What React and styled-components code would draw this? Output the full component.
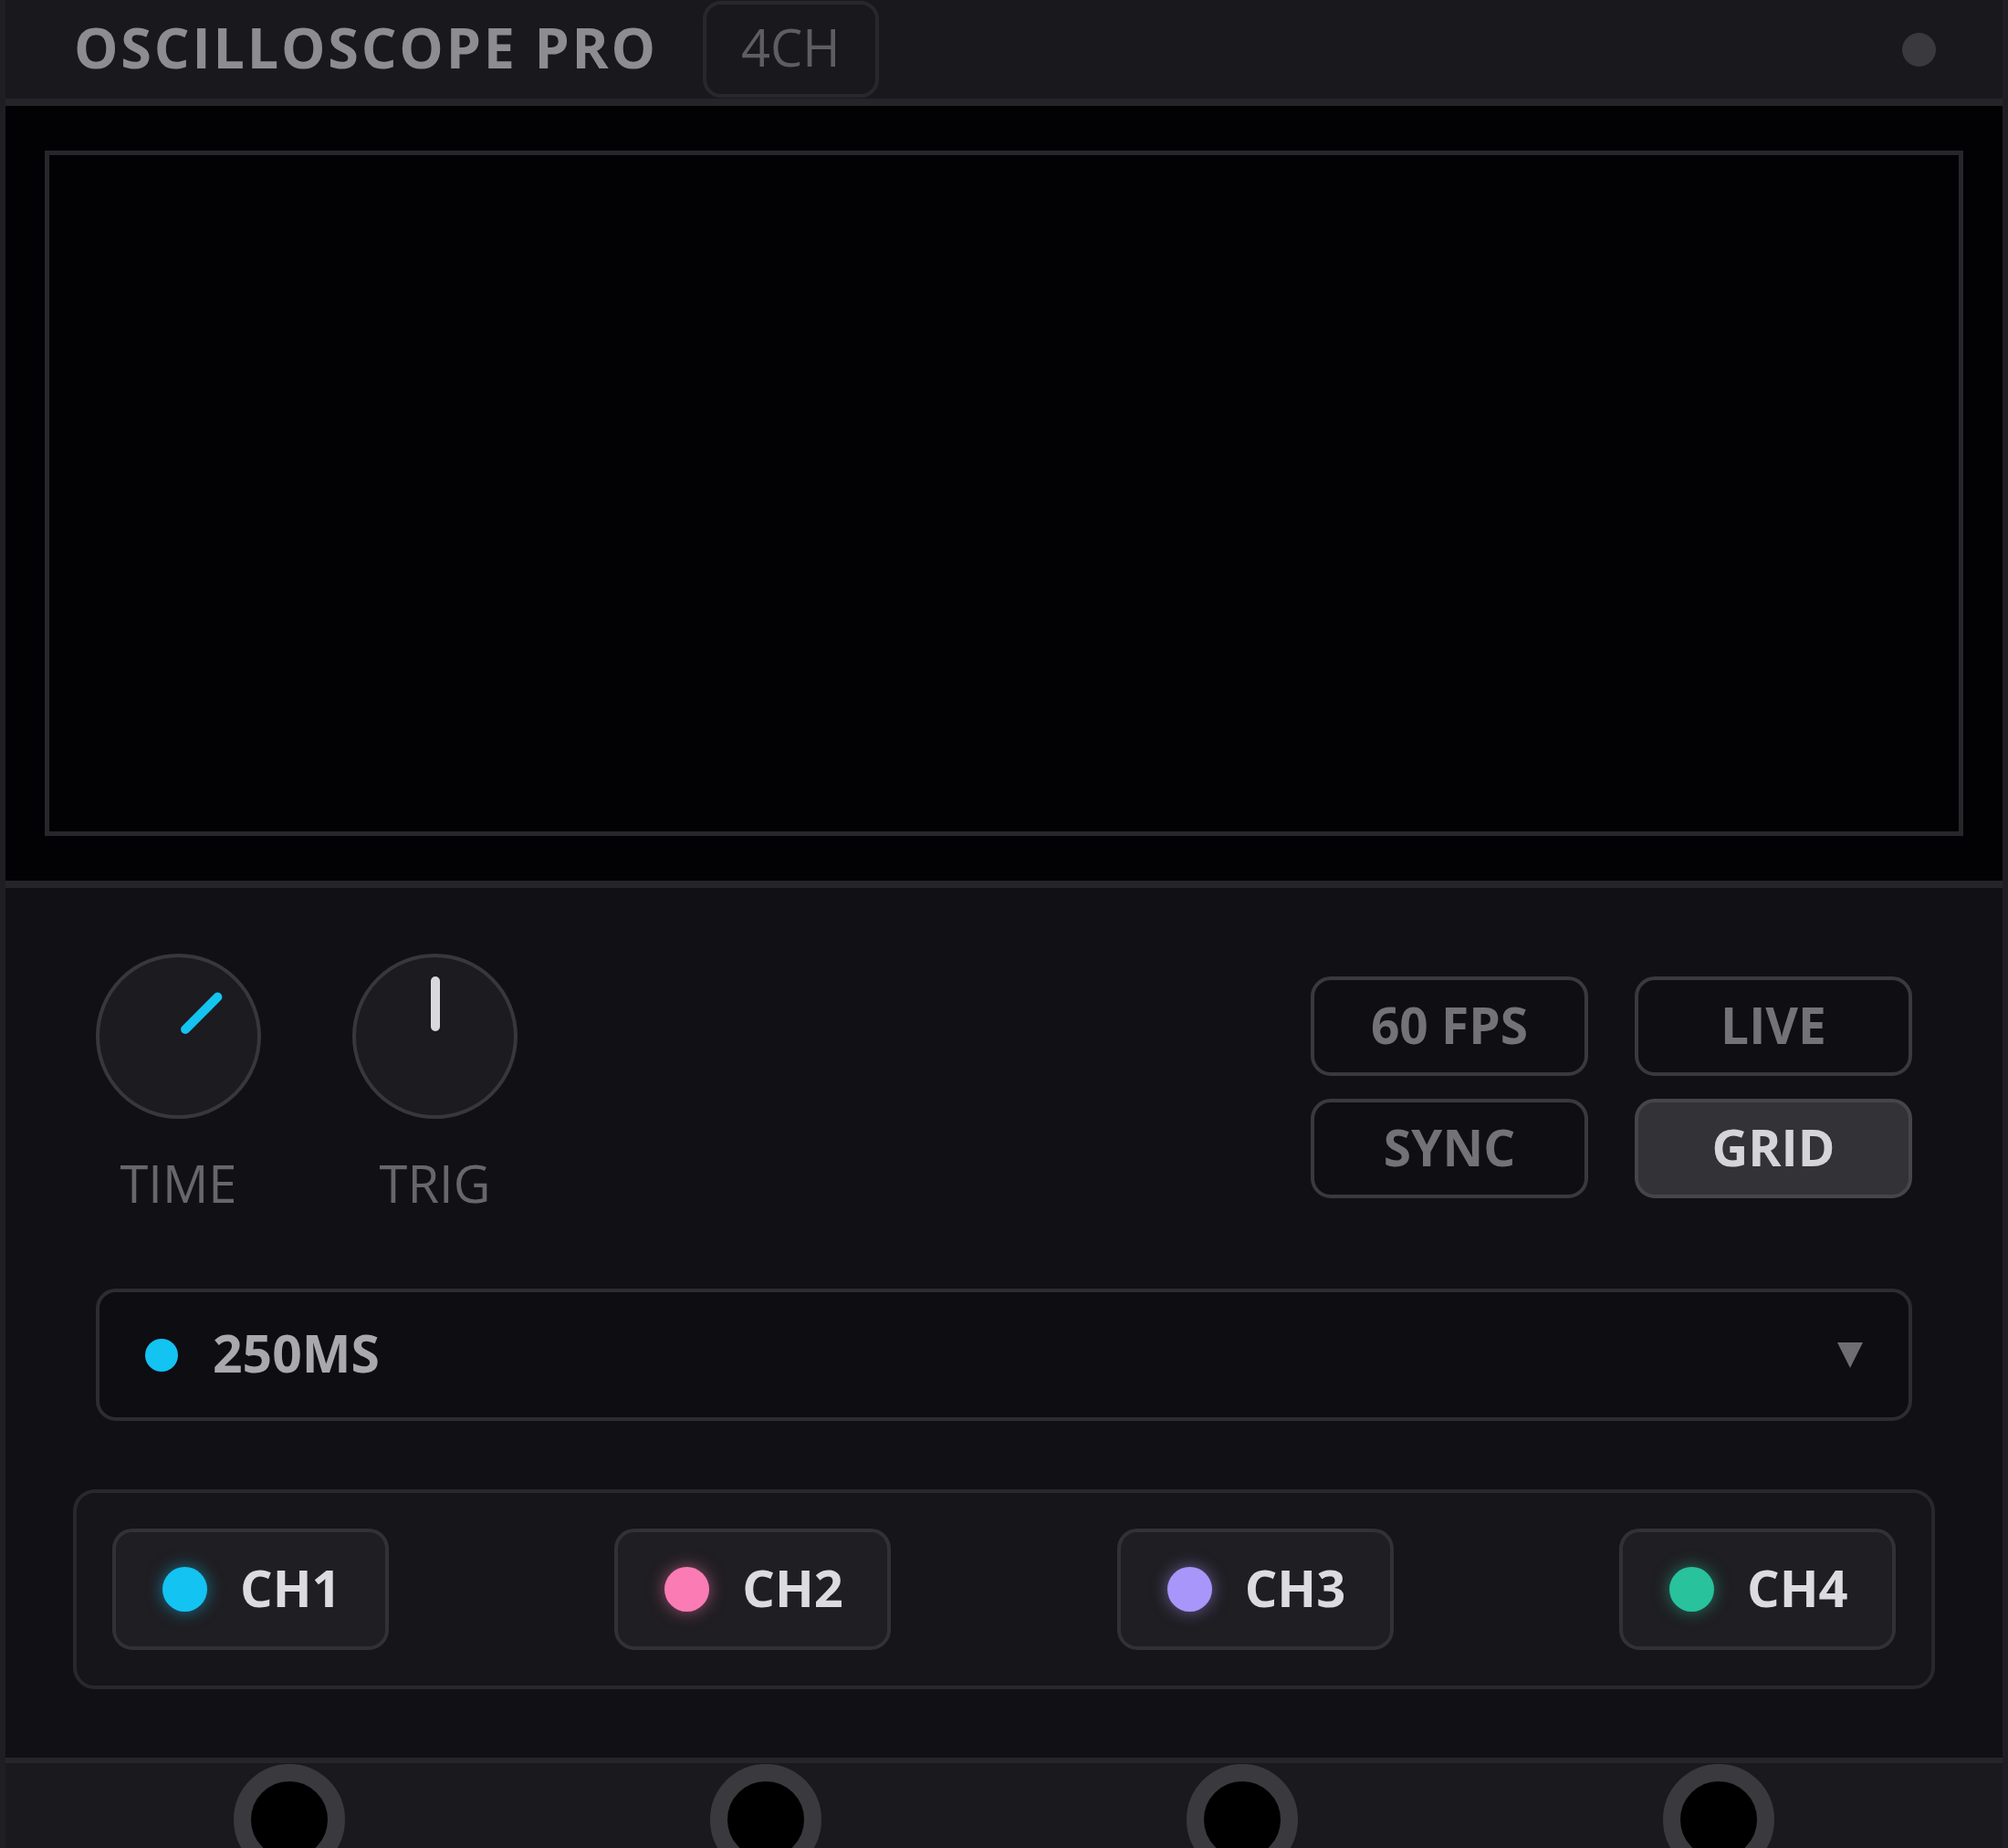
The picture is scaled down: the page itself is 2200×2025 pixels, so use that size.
import styled, { createGlobalStyle } from 'styled-components';

const GlobalStyle = createGlobalStyle`
  html, body {
    margin: 0;
    padding: 0;
    background: #1c1b1f;
  }
  * {
    box-sizing: border-box;
  }
`;

const channels = [
  { name: 'CH1', color: '#13c3f2' },
  { name: 'CH2', color: '#fb7bb5' },
  { name: 'CH3', color: '#a996fa' },
  { name: 'CH4', color: '#28c29d' },
];

const toggles = [
  { label: '60 FPS', active: false },
  { label: 'LIVE', active: false },
  { label: 'SYNC', active: false },
  { label: 'GRID', active: true },
];

function App() {
  return (
    <>
      <GlobalStyle />
      <Panel>
        <Header>
          <Title>OSCILLOSCOPE PRO</Title>
          <Badge>4CH</Badge>
          <StatusDot />
        </Header>

        <Screen>
          <Frame />
        </Screen>

        <Controls>
          <TopRow>
            <Knobs>
              <KnobColumn>
                <Knob>
                  <Pointer angle={45} color="#14c3f0" />
                </Knob>
                <KnobLabel>TIME</KnobLabel>
              </KnobColumn>
              <KnobColumn>
                <Knob>
                  <Pointer angle={0} color="#d9d8dd" />
                </Knob>
                <KnobLabel>TRIG</KnobLabel>
              </KnobColumn>
            </Knobs>
            <ToggleGrid>
              {toggles.map((t) => (
                <Toggle key={t.label} active={t.active}>
                  {t.label}
                </Toggle>
              ))}
            </ToggleGrid>
          </TopRow>

          <Select>
            <Dot size={36} color="#13c3f2" />
            <SelectValue>250MS</SelectValue>
            <Caret viewBox="0 0 28 28">
              <polygon points="0,0 28,0 14,28" fill="currentColor" />
            </Caret>
          </Select>

          <ChannelStrip>
            {channels.map((ch) => (
              <ChannelButton key={ch.name}>
                <Dot size={49} color={ch.color} glow />
                <ChannelName>{ch.name}</ChannelName>
              </ChannelButton>
            ))}
          </ChannelStrip>
        </Controls>

        <Jacks>
          {channels.map((ch) => (
            <Jack key={ch.name} />
          ))}
        </Jacks>
      </Panel>
    </>
  );
}

export default App;

const Panel = styled.div`
  width: 2200px;
  border-left: 6px solid #1f1e22;
  border-right: 6px solid #1f1e22;
  font-family: 'Open Sans', 'Noto Sans', sans-serif;
`;

const Header = styled.div`
  height: 116px;
  display: flex;
  align-items: center;
  padding: 0 73px 0 75px;
  background: #19181c;
  border-bottom: 8px solid #252428;
`;

const Title = styled.h1`
  margin: 0 0 6px;
  font-size: 61px;
  font-weight: 700;
  letter-spacing: 2.8px;
  color: #8d8c91;
  line-height: 1;
`;

const Badge = styled.div`
  margin-left: 49px;
  height: 106px;
  display: flex;
  align-items: center;
  padding: 0 38px 6px;
  border: 4px solid #28272b;
  border-radius: 20px;
  font-size: 56px;
  font-weight: 400;
  color: #5e5d62;
`;

const StatusDot = styled.div`
  margin-left: auto;
  width: 37px;
  height: 37px;
  border-radius: 50%;
  background: #3a393e;
`;

const Screen = styled.div`
  background: #020103;
  padding: 49px 43px;
  border-bottom: 8px solid #252428;
`;

const Frame = styled.div`
  height: 751px;
  border: 5px solid #27262a;
`;

const Controls = styled.div`
  background: #111014;
  padding: 72px 99px 75px;
`;

const TopRow = styled.div`
  display: flex;
  justify-content: space-between;
  align-items: flex-start;
`;

const Knobs = styled.div`
  display: flex;
  gap: 100px;
`;

const KnobColumn = styled.div`
  display: flex;
  flex-direction: column;
  align-items: center;
`;

const Knob = styled.div`
  position: relative;
  width: 181px;
  height: 181px;
  border-radius: 50%;
  border: 4px solid #38373c;
  background: #1c1b20;
`;

const Pointer = styled.span`
  position: absolute;
  left: 50%;
  top: 21px;
  width: 10px;
  height: 60px;
  margin-left: -5px;
  border-radius: 5px;
  background: ${(p) => p.color};
  transform-origin: 50% 65px;
  transform: rotate(${(p) => p.angle}deg);
`;

const KnobLabel = styled.div`
  margin-top: 37px;
  font-size: 56px;
  line-height: 67px;
  color: #67666b;
`;

const ToggleGrid = styled.div`
  margin-top: 25px;
  display: grid;
  grid-template-columns: repeat(2, 304px);
  grid-auto-rows: 109px;
  column-gap: 51px;
  row-gap: 25px;
`;

const Toggle = styled.div`
  display: flex;
  align-items: center;
  justify-content: center;
  padding-bottom: 5px;
  border: 4px solid ${(p) => (p.active ? '#46454a' : '#3a393e')};
  border-radius: 22px;
  background: ${(p) => (p.active ? '#333237' : '#0f0e12')};
  color: ${(p) => (p.active ? '#d5d4d9' : '#737277')};
  font-size: 55px;
  font-weight: 700;
`;

const Select = styled.div`
  margin-top: 82px;
  height: 145px;
  display: flex;
  align-items: center;
  padding: 0 50px;
  border: 4px solid #2d2c31;
  border-radius: 22px;
  background: #0e0d11;
`;

const Dot = styled.span`
  flex: none;
  width: ${(p) => p.size}px;
  height: ${(p) => p.size}px;
  border-radius: 50%;
  background: ${(p) => p.color};
  box-shadow: ${(p) => (p.glow ? `0 0 18px ${p.color}88` : 'none')};
`;

const SelectValue = styled.span`
  margin: 0 0 5px 38px;
  font-size: 57px;
  font-weight: 700;
  color: #a9a8ad;
`;

const Caret = styled.svg`
  margin-left: auto;
  width: 28px;
  height: 28px;
  color: #6e6d72;
`;

const ChannelStrip = styled.div`
  margin: 75px -25px 0;
  display: flex;
  justify-content: space-between;
  padding: 39px;
  border: 4px solid #29282c;
  border-radius: 24px;
  background: #161519;
`;

const ChannelButton = styled.div`
  width: 303px;
  height: 133px;
  display: flex;
  align-items: center;
  padding-left: 51px;
  border: 4px solid #323136;
  border-radius: 22px;
  background: #1f1e22;
`;

const ChannelName = styled.span`
  margin: 0 0 5px 36px;
  font-size: 56px;
  font-weight: 700;
  color: #dcdbe0;
`;

const Jacks = styled.div`
  display: flex;
  justify-content: space-between;
  padding: 1px 250px 40px;
  background: #1a191d;
  border-top: 6px solid #262529;
`;

const Jack = styled.div`
  width: 122px;
  height: 122px;
  border-radius: 50%;
  border: 19px solid #3a393e;
  background: #000;
`;
